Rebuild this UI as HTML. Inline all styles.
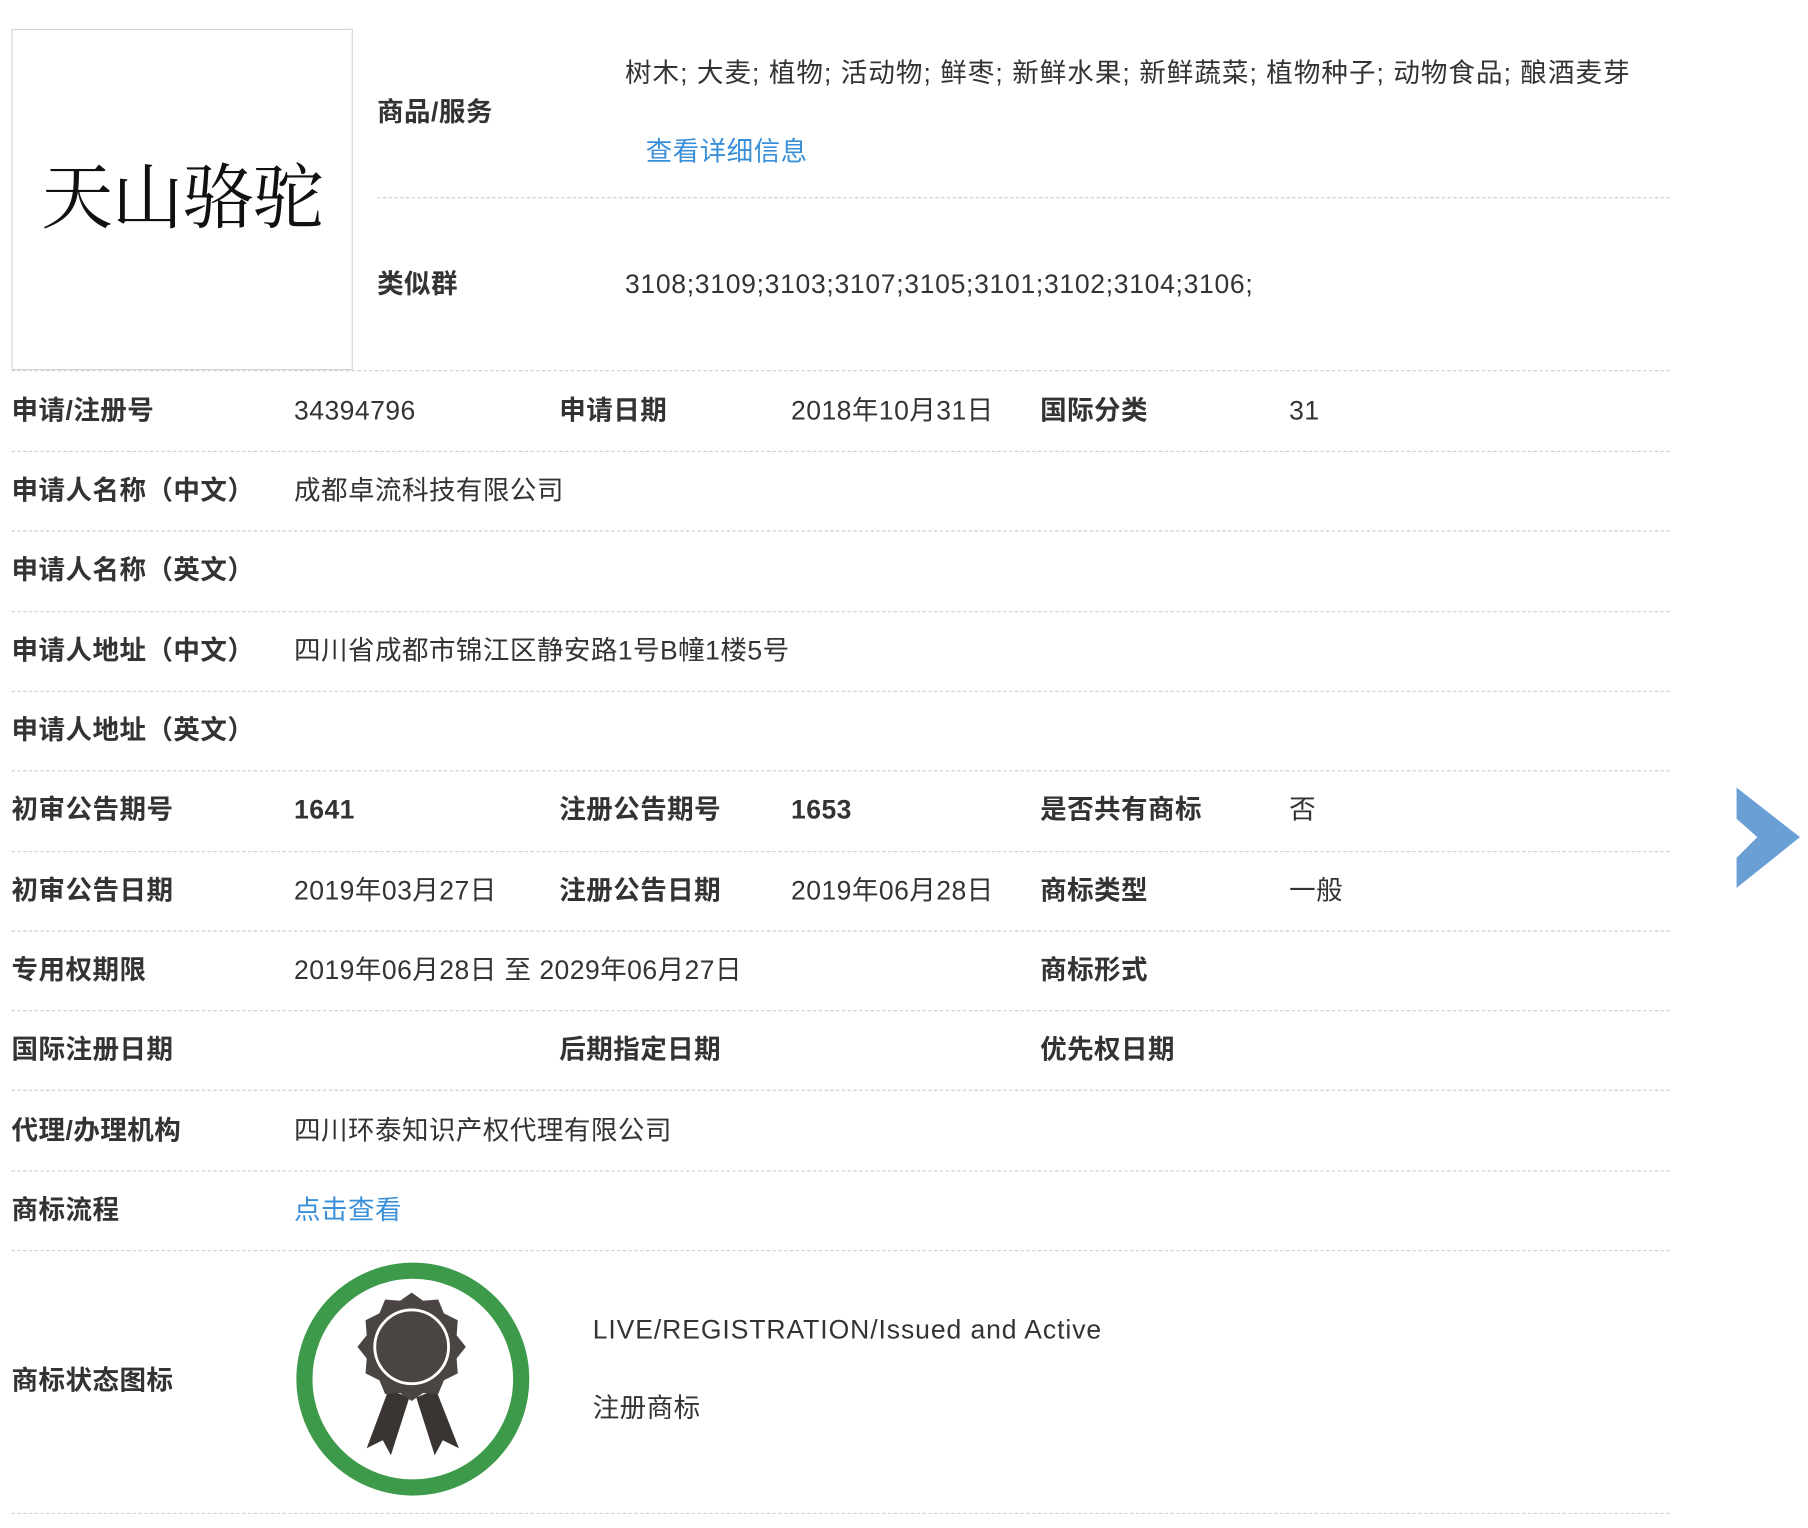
<!DOCTYPE html>
<html><head><meta charset="utf-8">
<style>
html,body{margin:0;padding:0;background:#fff;width:1808px;height:1528px;overflow:hidden;}
#w{position:absolute;left:0;top:0;width:1568px;height:1325px;transform:scale(1.1531);transform-origin:0 0;
font-family:"Liberation Sans","Noto Sans CJK SC",sans-serif;color:#333;font-size:23px;letter-spacing:0.4px;}
.t{position:absolute;white-space:nowrap;line-height:1;}
.b{font-weight:bold;}
.blue{color:#3a8fd9;}
.hl{position:absolute;height:0;border-top:1.5px dashed #d0d0d0;}
</style></head><body>
<div id="w">
<div style="position:absolute;left:10px;top:25px;width:294px;height:294px;border:1.5px solid #d4d4d4;"></div>
<div class="t" style="left:36px;top:136px;font-family:'Noto Serif CJK SC',serif;font-size:62px;color:#111;letter-spacing:-1px;">天山骆驼</div>

<div class="t b" style="left:327px;top:86px;">商品/服务</div>
<div class="t" style="left:542px;top:52px;letter-spacing:0.9px;">树木; 大麦; 植物; 活动物; 鲜枣; 新鲜水果; 新鲜蔬菜; 植物种子; 动物食品; 酿酒麦芽</div>
<div class="t blue" style="left:560px;top:120px;">查看详细信息</div>
<div class="hl" style="left:327px;width:1121px;top:171px;"></div>
<div class="t b" style="left:327px;top:235px;">类似群</div>
<div class="t" style="left:542px;top:235px;letter-spacing:0.6px;">3108;3109;3103;3107;3105;3101;3102;3104;3106;</div>
<div class="hl" style="left:10px;width:1438px;top:321px;"></div>

<div class="t b" style="left:10px;top:345px;">申请/注册号</div>
<div class="t" style="left:255px;top:345px;">34394796</div>
<div class="t b" style="left:485px;top:345px;">申请日期</div>
<div class="t" style="left:686px;top:345px;">2018年10月31日</div>
<div class="t b" style="left:902px;top:345px;">国际分类</div>
<div class="t" style="left:1118px;top:345px;">31</div>
<div class="hl" style="left:10px;width:1438px;top:391px;"></div>

<div class="t b" style="left:10px;top:414px;">申请人名称（中文）</div>
<div class="t" style="left:255px;top:414px;">成都卓流科技有限公司</div>
<div class="hl" style="left:10px;width:1438px;top:460px;"></div>

<div class="t b" style="left:10px;top:483px;">申请人名称（英文）</div>
<div class="hl" style="left:10px;width:1438px;top:530px;"></div>

<div class="t b" style="left:10px;top:553px;">申请人地址（中文）</div>
<div class="t" style="left:255px;top:553px;">四川省成都市锦江区静安路1号B幢1楼5号</div>
<div class="hl" style="left:10px;width:1438px;top:599px;"></div>

<div class="t b" style="left:10px;top:622px;">申请人地址（英文）</div>
<div class="hl" style="left:10px;width:1438px;top:668px;"></div>

<div class="t b" style="left:10px;top:691px;">初审公告期号</div>
<div class="t b" style="left:255px;top:691px;">1641</div>
<div class="t b" style="left:485px;top:691px;">注册公告期号</div>
<div class="t b" style="left:686px;top:691px;">1653</div>
<div class="t b" style="left:902px;top:691px;">是否共有商标</div>
<div class="t" style="left:1118px;top:691px;">否</div>
<div class="hl" style="left:10px;width:1438px;top:738px;"></div>

<div class="t b" style="left:10px;top:761px;">初审公告日期</div>
<div class="t" style="left:255px;top:761px;">2019年03月27日</div>
<div class="t b" style="left:485px;top:761px;">注册公告日期</div>
<div class="t" style="left:686px;top:761px;">2019年06月28日</div>
<div class="t b" style="left:902px;top:761px;">商标类型</div>
<div class="t" style="left:1118px;top:761px;">一般</div>
<div class="hl" style="left:10px;width:1438px;top:807px;"></div>

<div class="t b" style="left:10px;top:830px;">专用权期限</div>
<div class="t" style="left:255px;top:830px;">2019年06月28日 至 2029年06月27日</div>
<div class="t b" style="left:902px;top:830px;">商标形式</div>
<div class="hl" style="left:10px;width:1438px;top:876px;"></div>

<div class="t b" style="left:10px;top:899px;">国际注册日期</div>
<div class="t b" style="left:485px;top:899px;">后期指定日期</div>
<div class="t b" style="left:902px;top:899px;">优先权日期</div>
<div class="hl" style="left:10px;width:1438px;top:945px;"></div>

<div class="t b" style="left:10px;top:969px;">代理/办理机构</div>
<div class="t" style="left:255px;top:969px;">四川环泰知识产权代理有限公司</div>
<div class="hl" style="left:10px;width:1438px;top:1015px;"></div>

<div class="t b" style="left:10px;top:1038px;">商标流程</div>
<div class="t blue" style="left:255px;top:1038px;">点击查看</div>
<div class="hl" style="left:10px;width:1438px;top:1084px;"></div>

<div class="t b" style="left:10px;top:1186px;">商标状态图标</div>
<svg style="position:absolute;left:0;top:0;" width="1568" height="1325">
<circle cx="358" cy="1196" r="94" fill="none" stroke="#3e9a4b" stroke-width="14"/>
<path d="M337 1205 L318 1256 L332 1249 L339 1262 L355 1212 Z" fill="#3a3532"/>
<path d="M378 1205 L398 1256 L384 1249 L377 1262 L361 1212 Z" fill="#3a3532"/>
<path d="M357 1121 L367 1128 L380 1127 L385 1139 L397 1145 L396 1158 L404 1168 L396 1178 L397 1191 L385 1197 L380 1209 L367 1208 L357 1215 L347 1208 L334 1209 L329 1197 L317 1191 L318 1178 L310 1168 L318 1158 L317 1145 L329 1139 L334 1127 L347 1128 Z" fill="#4a4442"/>
<circle cx="357" cy="1168" r="32" fill="none" stroke="#fff" stroke-width="2.5"/>
<polygon points="1506,683 1561,726 1506,770 1506,744 1524,726 1506,710" fill="#6a9fd6"/>
</svg>
<div class="t" style="left:514px;top:1142px;letter-spacing:0.8px;">LIVE/REGISTRATION/Issued and Active</div>
<div class="t" style="left:514px;top:1210px;">注册商标</div>
<div class="hl" style="left:10px;width:1438px;top:1312px;"></div>
</div>
</body></html>
